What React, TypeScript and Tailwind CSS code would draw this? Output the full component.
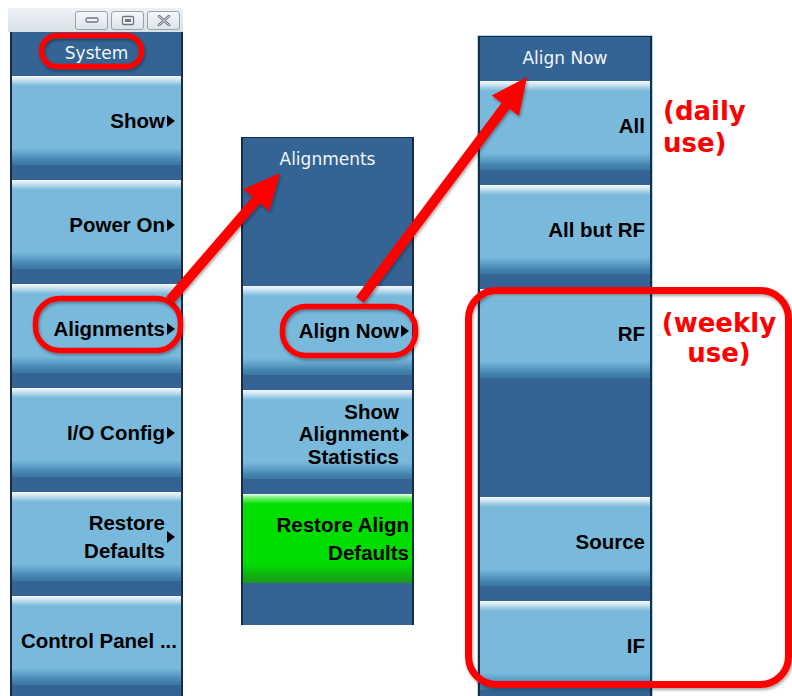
import React from "react";

const blueBtn =
  "bg-[linear-gradient(to_bottom,#f6f9fb_0px,#d6e9f4_3px,#79b9dc_10px,#79b9dc_72px,#5b9dc5_79px,#4585ae_84px,#3a77a1_89px)]";
const greenBtn =
  "bg-[linear-gradient(to_bottom,#eeffee_0px,#8af28a_3px,#00e000_10px,#00dc00_70px,#0fb50f_80px,#1a981a_89px)]";

function Tri() {
  return (
    <svg width="8" height="12" viewBox="0 0 8 12" className="shrink-0">
      <polygon points="0,0 8,6 0,12" fill="#000" />
    </svg>
  );
}

function Btn({
  lines,
  arrow = false,
  green = false,
  leading = "leading-[28px]",
  pr = "pr-[6px]",
  mb = true,
}: {
  lines: string[];
  arrow?: boolean;
  green?: boolean;
  leading?: string;
  pr?: string;
  mb?: boolean;
}) {
  return (
    <div
      className={`flex h-[89px] shrink-0 items-center justify-end gap-[2px] ${pr} ${
        green ? greenBtn : blueBtn
      } ${mb ? "mb-[15px]" : ""}`}
    >
      <div
        className={`text-right font-['Liberation_Sans',Arial,sans-serif] text-[20.5px] font-bold text-black ${leading}`}
      >
        {lines.map((l, i) => (
          <div key={i} className="whitespace-nowrap">
            {l}
          </div>
        ))}
      </div>
      {arrow && <Tri />}
    </div>
  );
}

function Empty() {
  return <div className="mb-[15px] h-[89px] shrink-0" />;
}

function Header({ text }: { text: string }) {
  return (
    <div className="flex h-[44px] shrink-0 items-center justify-center font-['DejaVu_Sans',sans-serif] text-[17px] text-[#f2f5f9]">
      {text}
    </div>
  );
}

function WinBtn({ children }: { children: React.ReactNode }) {
  return (
    <div className="flex h-[19px] w-[33px] items-center justify-center rounded-[3px] border border-[#98a2ae] bg-[linear-gradient(to_bottom,#f6f8fa,#dde3e9)]">
      {children}
    </div>
  );
}

export default function App() {
  return (
    <div className="relative flex h-[696px] w-[792px] items-start overflow-hidden bg-white">
      {/* Panel 1 - System */}
      <div className="ml-[8px] mt-[8px] flex w-[175px] flex-col self-stretch">
        <div className="flex h-[24px] shrink-0 items-center justify-end gap-[3px] bg-[linear-gradient(to_bottom,#eef2f6,#d9e0e8)] pr-[3px]">
          <WinBtn>
            <svg width="14" height="6" viewBox="0 0 14 6">
              <rect x="1" y="1" width="12" height="4" rx="1.5" fill="#f4f4f4" stroke="#6f7781" strokeWidth="1.3" />
            </svg>
          </WinBtn>
          <WinBtn>
            <svg width="14" height="11" viewBox="0 0 14 11">
              <rect x="1.5" y="1.5" width="11" height="8" rx="1" fill="#f4f4f4" stroke="#6f7781" strokeWidth="1.3" />
              <rect x="4" y="4" width="6" height="3" fill="#6f7781" />
            </svg>
          </WinBtn>
          <WinBtn>
            <svg width="14" height="11" viewBox="0 0 14 11">
              <path d="M2 1 L12 10 M12 1 L2 10" stroke="#6f7781" strokeWidth="2.6" strokeLinecap="round" />
              <path d="M2 1 L12 10 M12 1 L2 10" stroke="#e9ecef" strokeWidth="0.9" strokeLinecap="round" />
            </svg>
          </WinBtn>
        </div>
        <div className="ml-[2px] flex flex-1 flex-col border-x-2 border-[#1b2b45] bg-[#336494]">
          <Header text="System" />
          <Btn lines={["Show"]} arrow />
          <Btn lines={["Power On"]} arrow />
          <Btn lines={["Alignments"]} arrow />
          <Btn lines={["I/O Config"]} arrow />
          <Btn lines={["Restore", "Defaults"]} arrow />
          <Btn lines={["Control Panel ..."]} pr="pr-[4px]" />
        </div>
      </div>

      {/* Panel 2 - Alignments */}
      <div className="ml-[58px] mt-[137px] flex h-[488px] w-[173px] flex-col border-x-2 border-t border-[#1b2b45] bg-[#336494]">
        <Header text="Alignments" />
        <Empty />
        <Btn lines={["Align Now"]} arrow pr="pr-[3px]" />
        <Btn
          lines={["Show", "Alignment", "Statistics"]}
          arrow
          leading="leading-[22.5px]"
          pr="pr-[3px]"
        />
        <Btn lines={["Restore Align", "Defaults"]} green pr="pr-[3px]" />
      </div>

      {/* Panel 3 - Align Now */}
      <div className="ml-[63px] mt-[35px] flex w-[176px] flex-col self-stretch border-x border-t border-[#a9d7ef]">
        <div className="flex flex-1 flex-col border-x-2 border-t border-[#1b2b45] bg-[#336494]">
          <Header text="Align Now" />
          <Btn lines={["All"]} pr="pr-[5px]" />
          <Btn lines={["All but RF"]} pr="pr-[5px]" />
          <Btn lines={["RF"]} pr="pr-[5px]" />
          <Empty />
          <Btn lines={["Source"]} pr="pr-[5px]" />
          <Btn lines={["IF"]} pr="pr-[5px]" />
        </div>
      </div>

      {/* Annotation overlay */}
      <svg
        className="pointer-events-none absolute left-0 top-0"
        width="792"
        height="696"
        viewBox="0 0 792 696"
      >
        <defs>
          <filter id="sh" x="-10%" y="-10%" width="120%" height="130%">
            <feDropShadow dx="1" dy="2" stdDeviation="1.6" floodColor="#000" floodOpacity="0.35" />
          </filter>
        </defs>
        <g filter="url(#sh)" fill="none" stroke="#ff0000" strokeWidth="5.5">
          <rect x="41.5" y="35.5" width="100" height="31" rx="15.5" />
          <rect x="35.5" y="298.5" width="145" height="52" rx="24" />
          <rect x="282.5" y="306.5" width="133" height="49" rx="23" />
        </g>
        <rect
          x="468.5"
          y="290.5"
          width="320"
          height="394"
          rx="28"
          fill="none"
          stroke="#ff0000"
          strokeWidth="7"
          filter="url(#sh)"
        />
        <g filter="url(#sh)">
          <line x1="170" y1="300" x2="258" y2="198" stroke="#ff0000" strokeWidth="10" />
          <polygon points="280,173 269.3,211.3 243.5,189.1" fill="#ff0000" />
          <line x1="360" y1="300" x2="507" y2="104" stroke="#ff0000" strokeWidth="10" />
          <polygon points="527,77 519,116 491.8,95.6" fill="#ff0000" />
        </g>
      </svg>

      <div className="absolute left-[663px] top-[95px] font-['DejaVu_Sans',sans-serif] text-[26px] font-bold leading-[32px] text-[#ff0000]">
        <div>(daily</div>
        <div>use)</div>
      </div>
      <div className="absolute left-[655px] top-[308px] w-[128px] text-center font-['DejaVu_Sans',sans-serif] text-[26px] font-bold leading-[30px] text-[#ff0000]">
        <div>(weekly</div>
        <div>use)</div>
      </div>
    </div>
  );
}
